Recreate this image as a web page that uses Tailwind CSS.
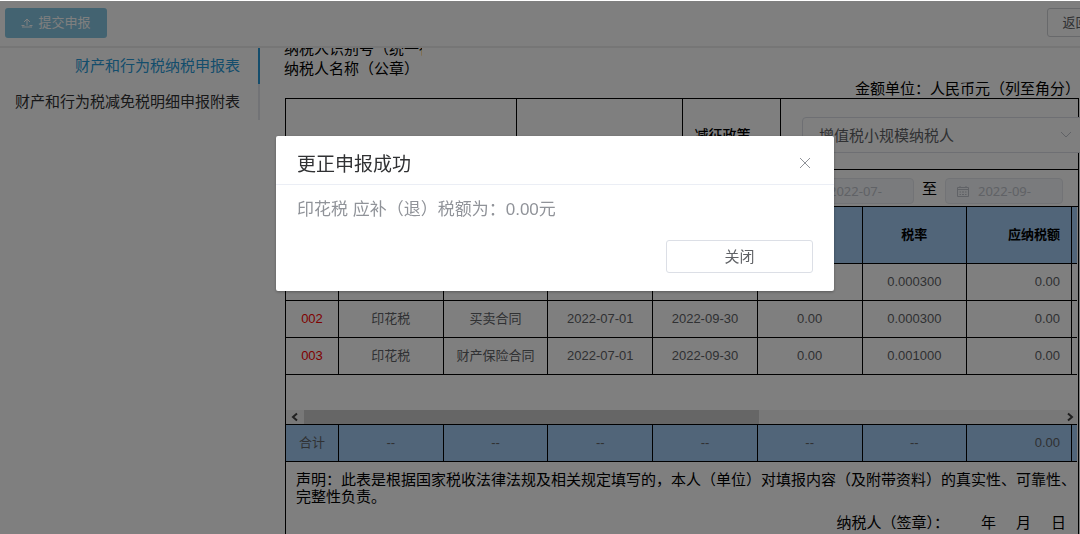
<!DOCTYPE html>
<html lang="zh-CN">
<head>
    <meta charset="UTF-8">
    <meta name="viewport" content="width=device-width, initial-scale=1.0">
    <title>财产和行为税纳税申报表</title>
    <script src="https://cdn.jsdelivr.net/npm/@tailwindcss/browser@4"></script>
</head>
<body class="h-screen overflow-hidden bg-white font-['Liberation_Sans','Noto_Sans_CJK_SC',sans-serif] text-[15px] text-black">
    <div class="flex h-full flex-col">
        <!-- toolbar -->
        <header class="flex shrink-0 items-start justify-between border-b-2 border-[#ececec] pt-2 pb-2 pl-[5px]">
            <button class="flex h-[30px] w-[102px] items-center justify-center gap-[5px] rounded-[3px] bg-[#87c7e2] text-[13px] text-white">
                <svg class="size-3" viewBox="0 0 12 12" fill="none" stroke="currentColor"><path d="M6 8.500V2M3 5l3-3 3 3M.5 8.500h3M8.500 8.500h3M1 10h10"/></svg>
                提交申报
            </button>
            <button class="-mr-6 h-[29px] w-[57px] rounded-[3px] border border-[#d0d2d6] text-[13px] text-[#606266]">返回</button>
        </header>

        <div class="flex min-h-0 grow">
            <!-- side menu -->
            <nav class="flex w-[260px] shrink-0 flex-col text-right">
                <a href="#" class="h-9 border-r-2 border-[#289ad8] pr-[18px] leading-9 text-[#289ad8]">财产和行为税纳税申报表</a>
                <a href="#" class="h-9 border-r-2 border-[#e4e7ed] pr-[18px] leading-9 text-[#303133]">财产和行为税减免税明细申报附表</a>
            </nav>

            <main class="min-w-0 grow overflow-hidden pl-6">
                <div class="-mt-[9px] w-[138px] overflow-hidden leading-5 whitespace-nowrap">
                    <p>纳税人识别号（统一社会信用代码）</p>
                    <p>纳税人名称（公章）</p>
                </div>
                <p class="text-right leading-[19px] whitespace-nowrap">金额单位：人民币元（列至角分）</p>

                <div class="mr-px ml-px border border-black">
                    <table class="w-full table-fixed border-separate border-spacing-0">
                        <colgroup><col class="w-[231px]"><col class="w-[166px]"><col class="w-[98px]"><col></colgroup>
                        <tbody>
                            <tr class="h-[71px]">
                                <td class="border-r border-b border-black"></td>
                                <td class="border-r border-b border-black"></td>
                                <td class="border-r border-b border-black pt-[2px] pr-[18px] text-center text-sm font-medium"><label for="policy">减征政策</label></td>
                                <td class="border-b border-black pt-[2px] pl-[21px]">
                                    <div class="relative w-[290px]">
                                        <select id="policy" class="block h-9 w-full appearance-none rounded border border-[#dcdfe6] bg-white pt-[2px] pl-4 text-[#606266]">
                                            <option>增值税小规模纳税人</option>
                                        </select>
                                        <svg class="pointer-events-none absolute top-3 left-[258px] size-3" viewBox="0 0 12 12" fill="none" stroke="#c0c4cc"><path d="M1 3l5 5 5-5"/></svg>
                                    </div>
                                </td>
                            </tr>
                            <tr class="h-[37px]">
                                <td colspan="4" class="border-b border-black">
                                    <div class="flex items-center justify-end gap-2 pt-[6px] pr-[15px]">
                                        <div class="relative">
                                            <input aria-label="开始日期" value="2022-07-" disabled class="block h-[26px] w-[118px] rounded border border-[#e4e7ed] bg-[#f5f7fa] pl-8 font-['Noto_Sans',sans-serif] text-[13px] text-[#c0c4cc]">
                                            <svg class="absolute top-[7px] left-3 size-3" viewBox="0 0 12 12" fill="none" stroke="#c0c4cc"><path d="M.5 2.500h11v9H.5zM.5 4.500h11M3 1v2M9 1v2M2.500 7h1.500M5 7h2M8 7h1.500M2.500 9.500h1.500M5 9.500h2M8 9.500h1.500"/></svg>
                                        </div>
                                        <span class="pb-1 leading-5">至</span>
                                        <div class="relative">
                                            <input aria-label="结束日期" value="2022-09-" disabled class="block h-[26px] w-[118px] rounded border border-[#e4e7ed] bg-[#f5f7fa] pl-8 font-['Noto_Sans',sans-serif] text-[13px] text-[#c0c4cc]">
                                            <svg class="absolute top-[7px] left-3 size-3" viewBox="0 0 12 12" fill="none" stroke="#c0c4cc"><path d="M.5 2.500h11v9H.5zM.5 4.500h11M3 1v2M9 1v2M2.500 7h1.500M5 7h2M8 7h1.500M2.500 9.500h1.500M5 9.500h2M8 9.500h1.500"/></svg>
                                        </div>
                                    </div>
                                </td>
                            </tr>
                        </tbody>
                    </table>

                    <!-- detail rows -->
                    <div class="pr-px">
                        <table class="w-full table-fixed border-separate border-spacing-0 text-center text-[13px] text-[#606266] [&_td]:border-r [&_td]:border-b [&_td]:border-black [&_th]:border-r [&_th]:border-b [&_th]:border-black [&_tr>:last-child]:border-r-0">
                            <colgroup><col class="w-[53px]"><col><col><col><col><col><col><col><col class="w-[5px]"></colgroup>
                            <thead>
                                <tr class="h-[57px] bg-[#a2caf2] text-black">
                                    <th>序号</th><th>税种</th><th>税目</th><th>税款所属期起</th><th>税款所属期止</th><th>金额</th><th>税率</th><th class="pr-[11px] text-right">应纳税额</th><th></th>
                                </tr>
                            </thead>
                            <tbody>
                                <tr class="h-[37px]"><td class="text-[#ff0000]">001</td><td>印花税</td><td>买卖合同</td><td>2022-07-01</td><td>2022-09-30</td><td>0.00</td><td>0.000300</td><td class="pr-[11px] text-right">0.00</td><td></td></tr>
                                <tr class="h-[37px]"><td class="text-[#ff0000]">002</td><td>印花税</td><td>买卖合同</td><td>2022-07-01</td><td>2022-09-30</td><td>0.00</td><td>0.000300</td><td class="pr-[11px] text-right">0.00</td><td></td></tr>
                                <tr class="h-[37px]"><td class="text-[#ff0000]">003</td><td>印花税</td><td>财产保险合同</td><td>2022-07-01</td><td>2022-09-30</td><td>0.00</td><td>0.001000</td><td class="pr-[11px] text-right">0.00</td><td></td></tr>
                            </tbody>
                        </table>
                        <div class="mt-[35px] flex h-[15px] items-center border-b border-black bg-[#f0f0f0] text-[#404040]">
                            <svg class="mx-[3px] size-3 shrink-0" viewBox="0 0 12 12" fill="none" stroke="currentColor" stroke-width="2"><path d="M8 2.500L4 6l4 3.500"/></svg>
                            <div class="flex h-full grow"><div class="h-full w-[60%] bg-[#cdcdcd]"></div></div>
                            <svg class="mx-[1px] size-3 shrink-0" viewBox="0 0 12 12" fill="none" stroke="currentColor" stroke-width="2"><path d="M4 2.500L8 6l-4 3.500"/></svg>
                        </div>
                        <table class="w-full table-fixed border-separate border-spacing-0 text-center text-[13px] text-[#606266] [&_td]:border-r [&_td]:border-b [&_td]:border-black [&_tr>:last-child]:border-r-0">
                            <colgroup><col class="w-[53px]"><col><col><col><col><col><col><col><col class="w-[5px]"></colgroup>
                            <tbody>
                                <tr class="h-[37px] bg-[#a2caf2]"><td>合计</td><td>--</td><td>--</td><td>--</td><td>--</td><td>--</td><td>--</td><td class="pr-[11px] text-right">0.00</td><td></td></tr>
                            </tbody>
                        </table>
                    </div>

                    <div class="pt-[9px] pb-6 pl-[10px]">
                        <p class="leading-[17px]">声明：此表是根据国家税收法律法规及相关规定填写的，本人（单位）对填报内容（及附带资料）的真实性、可靠性、完整性负责。</p>
                        <p class="mt-2 flex justify-end gap-5 pr-3 leading-5"><span class="pr-3">纳税人（签章）：</span><span>年</span><span>月</span><span>日</span></p>
                    </div>
                </div>
            </main>
        </div>
    </div>

    <!-- result dialog -->
    <div class="fixed inset-0 top-px flex items-start justify-center bg-black/50 pt-[135px] pl-[30px]">
        <div role="dialog" aria-labelledby="dialog-title" class="w-[558px] rounded-[2px] bg-white shadow-[0_1px_3px_rgba(0,0,0,0.3)]">
            <div class="flex h-[49px] items-center justify-between border-b border-[#ebeef5] pt-2 pr-[23px] pl-[21px]">
                <h1 id="dialog-title" class="pt-[2px] text-[19px] text-[#303133]">更正申报成功</h1>
                <button aria-label="关闭对话框" class="pb-[2px]">
                    <svg class="size-3" viewBox="0 0 12 12" fill="none" stroke="#909399"><path d="M1 1l10 10M11 1L1 11"/></svg>
                </button>
            </div>
            <p class="px-[21px] pt-[13px] text-[17px] leading-6 text-[#909399]">印花税 应补（退）税额为：0.00元</p>
            <div class="flex justify-end px-[21px] py-[18px]">
                <button class="h-[33px] w-[147px] rounded-[3px] border border-[#dcdfe6] pt-[2px] text-[15px] text-[#606266]">关闭</button>
            </div>
        </div>
    </div>
</body>
</html>
